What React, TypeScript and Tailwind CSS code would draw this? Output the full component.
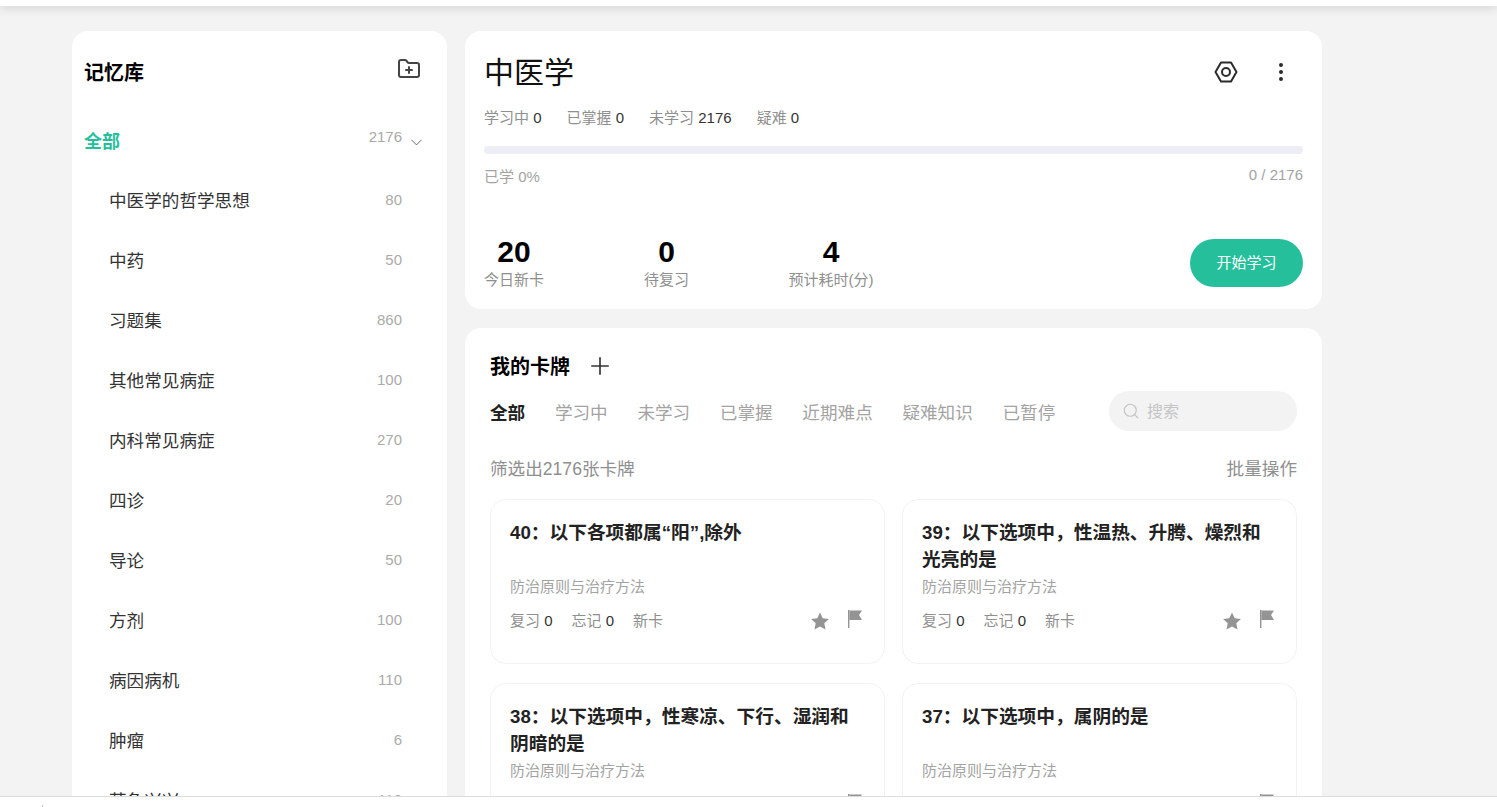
import React from 'react';
import { ChevronDown, EllipsisVertical, FolderPlus, Plus, Search } from 'lucide-react';

const decks = [
  { name: '中医学的哲学思想', count: 80 },
  { name: '中药', count: 50 },
  { name: '习题集', count: 860 },
  { name: '其他常见病症', count: 100 },
  { name: '内科常见病症', count: 270 },
  { name: '四诊', count: 20 },
  { name: '导论', count: 50 },
  { name: '方剂', count: 100 },
  { name: '病因病机', count: 110 },
  { name: '肿瘤', count: 6 },
  { name: '营急兴兴', count: 110 },
];

const tabs = ['学习中', '未学习', '已掌握', '近期难点', '疑难知识', '已暂停'];

const cards = [
  '40：以下各项都属“阳”,除外',
  '39：以下选项中，性温热、升腾、燥烈和光亮的是',
  '38：以下选项中，性寒凉、下行、湿润和阴暗的是',
  '37：以下选项中，属阴的是',
];

const StatLabel = ({ label, value }: { label: string; value: number }) => (
  <span className="text-[#8f8f8f]">
    {label} <span className="text-[#333]">{value}</span>
  </span>
);

const Card = ({ title }: { title: string }) => (
  <div className="h-[165px] rounded-2xl border border-[#f2f2f2] bg-white px-[19px] pt-[18px]">
    <div className="h-[54px] pt-[1px] text-[18.72px] leading-[27px] font-bold text-[#222]">{title}</div>
    <div className="mt-[5px] text-[15px] leading-[20px] text-[#a3a3a3]">防治原则与治疗方法</div>
    <div className="mt-[14px] flex items-center justify-between">
      <div className="flex gap-[19px] text-[15px] leading-[20px]">
        <StatLabel label="复习" value={0} />
        <StatLabel label="忘记" value={0} />
        <span className="text-[#8f8f8f]">新卡</span>
      </div>
      <div className="flex items-start gap-[17px] pr-[2px]">
        <svg width="20" height="20" viewBox="0 0 20 20" fill="#949494">
          <path d="M10 1.5l2.7 5.7 6.2.8-4.6 4.3 1.2 6.2L10 15.4l-5.5 3.1 1.2-6.2L1.1 8l6.2-.8z" />
        </svg>
        <svg width="16" height="18" viewBox="0 0 16 18" fill="#949494" className="-mt-[1px]">
          <path d="M1 0h1.4v18H1z" />
          <path d="M2.4 0.500H15l-3 4.500 3 5H2.400z" />
        </svg>
      </div>
    </div>
  </div>
);

export default function App() {
  return (
    <div className="flex h-[807px] w-full flex-col overflow-hidden bg-[#f3f3f3] font-['Liberation_Sans','Noto_Sans_CJK_SC',sans-serif]">
      <div className="z-10 h-[6px] shrink-0 bg-white shadow-[0_2px_10px_rgba(0,0,0,0.16)]" />

      <div className="flex min-h-0 flex-1 items-start gap-[18px] overflow-hidden pt-[25px] pl-[72px]">
        {/* Sidebar */}
        <aside className="w-[375px] shrink-0 rounded-t-2xl bg-white pr-[24px] pl-[12px]">
          <div className="flex h-[84px] items-center justify-between">
            <h2 className="text-[20px] font-bold text-black">记忆库</h2>
            <FolderPlus className="mr-[2px] mb-[9px] h-[24px] w-[24px] text-[#444]" strokeWidth={2} />
          </div>
          <div className="flex h-[56px] items-center justify-between pb-[2px]">
            <span className="text-[18px] font-bold text-[#26bf9c]">全部</span>
            <span className="flex items-center">
              <span className="mb-[10px] text-[15px] text-[#a8a8a8]">2176</span>
              <ChevronDown className="-mr-[3px] ml-[5px] h-[19px] w-[19px] text-[#444]" strokeWidth={1} />
            </span>
          </div>
          <ul>
            {decks.map((deck) => (
              <li key={deck.name} className="flex h-[60px] items-center justify-between pr-[21px] pl-[25px]">
                <span className="text-[17.6px] text-[#333]">{deck.name}</span>
                <span className="mb-[2px] text-[15px] text-[#aaa]">{deck.count}</span>
              </li>
            ))}
          </ul>
        </aside>

        {/* Main */}
        <main className="flex w-[857px] shrink-0 flex-col gap-[19px]">
          <section className="h-[278px] rounded-2xl bg-white px-[19px]">
            <div className="flex h-[70px] items-start justify-between pt-[20px]">
              <h1 className="text-[30px] leading-[44px] text-[#111]">中医学</h1>
              <div className="flex items-center gap-[31px] pt-[9px] pr-[10px]">
                <svg width="24" height="24" viewBox="0 0 24 24" fill="none" stroke="#2b2b2b" strokeWidth="2" strokeLinejoin="round">
                  <path d="M7 2.500h10l5.500 9.500-5.500 9.500H7L1.500 12z" />
                  <circle cx="12" cy="12" r="4" />
                </svg>
                <EllipsisVertical className="h-[24px] w-[24px] text-[#2b2b2b]" strokeWidth={2} />
              </div>
            </div>
            <div className="mt-[7px] flex gap-[25px] text-[15px] leading-[20px]">
              <StatLabel label="学习中" value={0} />
              <StatLabel label="已掌握" value={0} />
              <StatLabel label="未学习" value={2176} />
              <StatLabel label="疑难" value={0} />
            </div>
            <div className="mt-[18px] h-2 rounded-full bg-[#edeef5]" />
            <div className="mt-[11px] flex items-start justify-between text-[15px] leading-[20px] text-[#a3a3a3]">
              <span className="mt-[2px]">已学 0%</span>
              <span>0 / 2176</span>
            </div>
            <div className="mt-[48px] flex items-center justify-between">
              <div className="flex text-center">
                <div className="w-[60px]">
                  <div className="text-[30px] leading-[34px] font-bold text-black">20</div>
                  <div className="text-[15px] leading-[22px] text-[#8f8f8f]">今日新卡</div>
                </div>
                <div className="ml-[100px] w-[45px]">
                  <div className="text-[30px] leading-[34px] font-bold text-black">0</div>
                  <div className="text-[15px] leading-[22px] text-[#8f8f8f]">待复习</div>
                </div>
                <div className="ml-[99px] w-[86px]">
                  <div className="text-[30px] leading-[34px] font-bold text-black">4</div>
                  <div className="text-[15px] leading-[22px] whitespace-nowrap text-[#8f8f8f]">预计耗时(分)</div>
                </div>
              </div>
              <button className="h-[48px] w-[113px] rounded-full bg-[#26bf9c] text-[15px] text-white">开始学习</button>
            </div>
          </section>

          <section className="rounded-t-2xl bg-white px-[25px] pb-6">
            <div className="flex h-[61px] items-end pb-[9px]">
              <h2 className="text-[20px] leading-[26px] font-bold text-black">我的卡牌</h2>
              <Plus className="ml-[16px] h-[28px] w-[28px] text-[#333]" strokeWidth={1.4} />
            </div>
            <div className="mt-[2px] flex h-[40px] items-center justify-between">
              <div className="flex gap-[29.7px] pt-[4px] text-[17.6px]">
                <span className="font-bold text-[#222]">全部</span>
                {tabs.map((tab) => (
                  <span key={tab} className="text-[#a3a3a3]">{tab}</span>
                ))}
              </div>
              <div className="flex h-[40px] w-[188px] items-center gap-[7px] rounded-full bg-[#f3f3f3] pl-[13px]">
                <Search className="h-[18px] w-[18px] text-[#c4c4c4]" strokeWidth={1.5} />
                <span className="pt-[1px] text-[16px] text-[#c4c4c4]">搜索</span>
              </div>
            </div>
            <div className="mt-[19px] flex h-[38px] items-center justify-between text-[17.6px] text-[#8f8f8f]">
              <span>筛选出2176张卡牌</span>
              <span>批量操作</span>
            </div>
            <div className="mt-[11px] grid grid-cols-2 gap-x-[17px] gap-y-[19px]">
              {cards.map((title) => (
                <Card key={title} title={title} />
              ))}
            </div>
          </section>
        </main>
      </div>

      <div className="relative z-10 h-[11px] shrink-0 border-t border-[#dcdcdc] bg-white">
        <span className="absolute top-[8px] left-[42px] h-[2px] w-px bg-[#bbb]" />
      </div>
    </div>
  );
}
